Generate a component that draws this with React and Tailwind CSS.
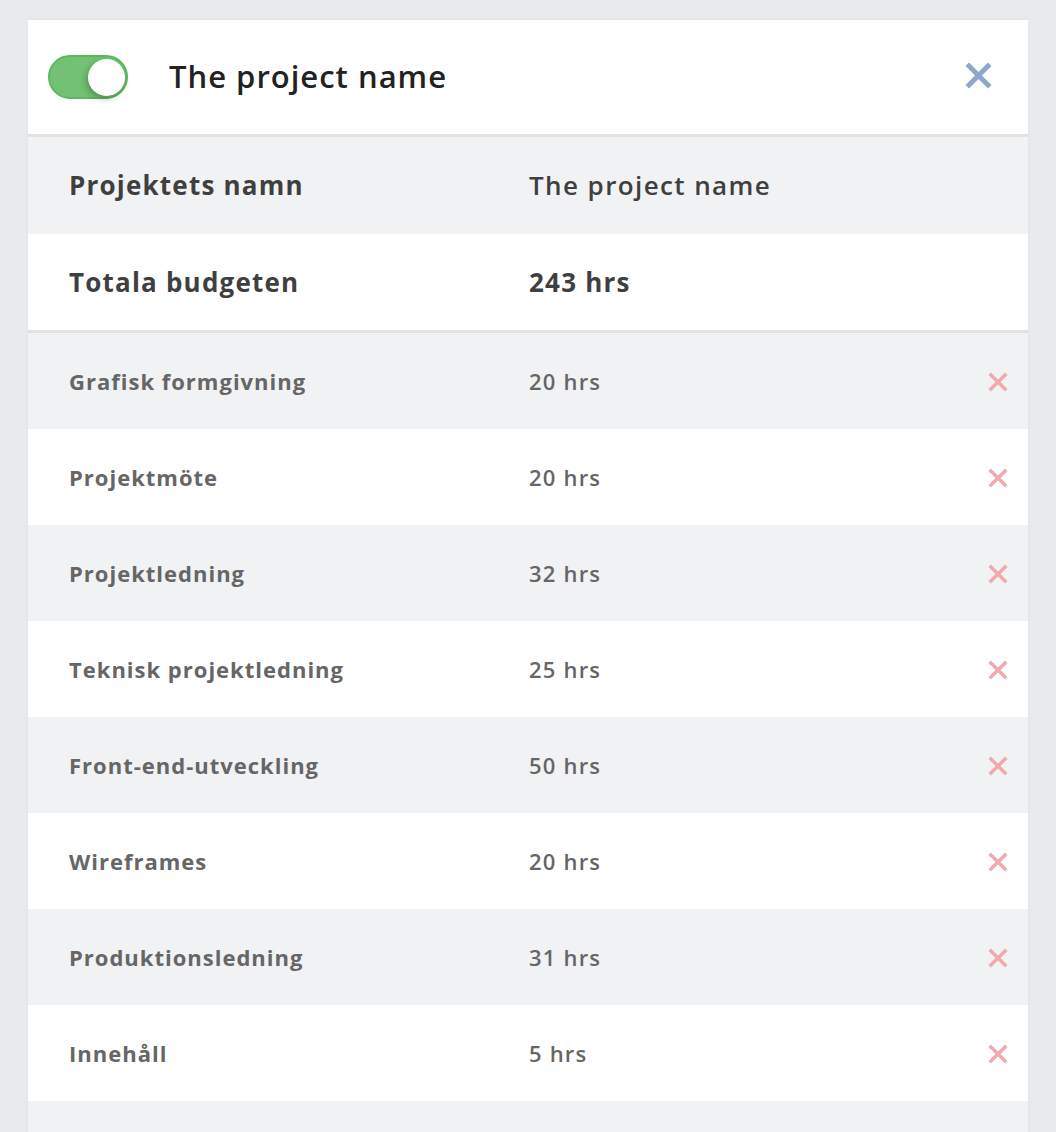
import { useState } from "react";

const tasks = [
  { name: "Grafisk formgivning", hours: 20 },
  { name: "Projektmöte", hours: 20 },
  { name: "Projektledning", hours: 32 },
  { name: "Teknisk projektledning", hours: 25 },
  { name: "Front-end-utveckling", hours: 50 },
  { name: "Wireframes", hours: 20 },
  { name: "Produktionsledning", hours: 31 },
  { name: "Innehåll", hours: 5 },
];

const CrossIcon = ({ className, stroke = 4 }) => (
  <svg viewBox="0 0 24 24" className={className} fill="none">
    <path
      d="M2 2L22 22M22 2L2 22"
      stroke="currentColor"
      strokeWidth={stroke}
      strokeLinecap="butt"
    />
  </svg>
);

const App = () => {
  const [active, setActive] = useState(true);
  const [items, setItems] = useState(tasks);

  return (
    <div
      className="h-screen overflow-hidden bg-[#e9eaeb] pt-[20px] pl-[28px]"
      style={{ fontFamily: "'Open Sans', 'Noto Sans', sans-serif" }}
    >
      <div className="w-[1000px] bg-white shadow-[0_0_3px_rgba(0,0,0,0.06)]">
        {/* Header */}
        <div className="h-[117px] flex items-center pl-[20px] pr-[36px] border-b-[3px] border-[#e1e2e4]">
          <button
            onClick={() => setActive(!active)}
            className={`w-[80px] h-[44px] rounded-full border-2 flex items-center px-[1px] ${
              active
                ? "bg-[#72c174] border-[#5cb85c] justify-end"
                : "bg-gray-300 border-gray-400 justify-start"
            }`}
          >
            <span className="w-[37px] h-[37px] rounded-full bg-white shadow-[-2px_3px_6px_rgba(0,0,0,0.25)]" />
          </button>
          <h1 className="ml-[41px] -mt-[2px] text-[31px] font-semibold text-[#222] tracking-[1px]">
            The project name
          </h1>
          <button className="ml-auto -mt-[3px] text-[#8ea6cc]">
            <CrossIcon className="w-[27px] h-[27px]" stroke={4.4} />
          </button>
        </div>

        {/* Project info */}
        <div className="grid grid-cols-[460px_1fr] items-center h-[97px] bg-[#f1f2f4] pl-[41px] text-[26px] text-[#3f3f3f]">
          <span className="font-bold tracking-[1.2px]">Projektets namn</span>
          <span className="font-semibold tracking-[1.4px]">The project name</span>
        </div>
        <div className="grid grid-cols-[460px_1fr] items-center h-[99px] bg-white pl-[41px] text-[26px] text-[#3f3f3f] tracking-[1.2px] border-b-[3px] border-[#e1e2e4]">
          <span className="font-bold">Totala budgeten</span>
          <span className="font-bold">243 hrs</span>
        </div>

        {/* Task rows */}
        {items.map((t, i) => (
          <div
            key={t.name}
            className={`grid grid-cols-[460px_1fr_auto] items-center h-[96px] pl-[41px] pr-[20px] pt-[1px] text-[22px] text-[#666] ${
              i % 2 === 0 ? "bg-[#f1f2f4]" : "bg-white"
            }`}
          >
            <span className="font-bold tracking-[1px]">{t.name}</span>
            <span className="font-semibold tracking-[1.2px]">{t.hours} hrs</span>
            <button
              onClick={() => setItems(items.filter((x) => x.name !== t.name))}
              className="text-[#f2a9ae]"
            >
              <CrossIcon className="w-[20px] h-[20px]" stroke={4.2} />
            </button>
          </div>
        ))}
        <div className="h-[96px] bg-[#f1f2f4]" />
      </div>
    </div>
  );
};

export default App;
